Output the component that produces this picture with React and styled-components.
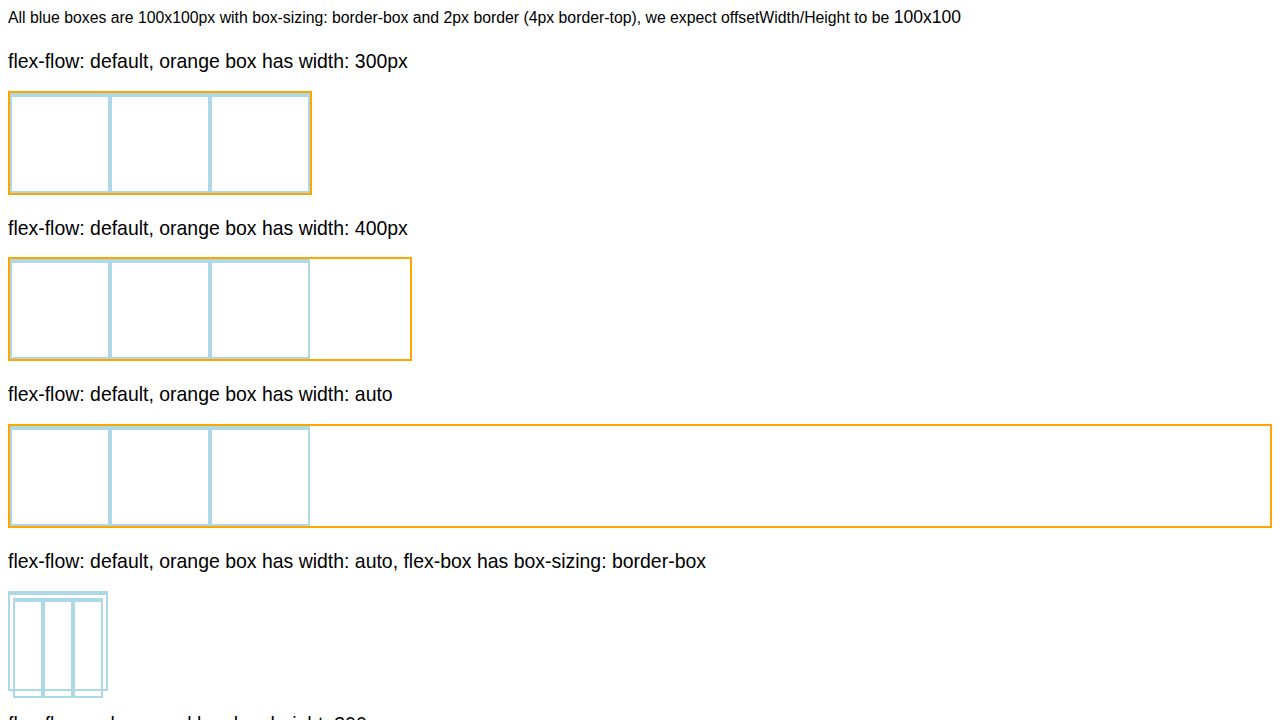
import React from "react";
import styled, { createGlobalStyle } from "styled-components";

const Global = createGlobalStyle`
  html { overflow: hidden; }
  body {
    margin: 8px;
    font-family: "Liberation Sans", Arial, sans-serif;
    color: #000;
    background: #fff;
  }
`;

const Intro = styled.div`
  font-size: 15.8px;
  line-height: 19.9px;
  white-space: nowrap;
`;

const Big = styled.span`
  font-size: 17.5px;
`;

const Heading = styled.p`
  font-size: 19.45px;
  line-height: 20.67px;
  margin: 23px 0 19px;
  white-space: nowrap;
`;

const Orange = styled.div`
  display: flex;
  border: 2px solid orange;
  width: ${(p) => p.$w || "auto"};
`;

const Blue = styled.div`
  box-sizing: border-box;
  width: 100px;
  height: 100px;
  flex: 0 1 auto;
  border: 2px solid lightblue;
  border-top-width: 4px;
`;

const BorderBoxFlex = styled.div`
  display: flex;
  box-sizing: border-box;
  width: 100px;
  height: 100px;
  padding: 3px;
  border: 2px solid lightblue;
  border-top-width: 4px;
`;

const Row = ({ w }) => (
  <Orange $w={w}>
    <Blue />
    <Blue />
    <Blue />
  </Orange>
);

export default function App() {
  return (
    <>
      <Global />
      <Intro>
        All blue boxes are 100x100px with box-sizing: border-box and 2px border (4px border-top), we expect
        offsetWidth/Height to be <Big>100x100</Big>
      </Intro>
      <Heading>flex-flow: default, orange box has width: 300px</Heading>
      <Row w="300px" />
      <Heading>flex-flow: default, orange box has width: 400px</Heading>
      <Row w="400px" />
      <Heading>flex-flow: default, orange box has width: auto</Heading>
      <Row />
      <Heading>flex-flow: default, orange box has width: auto, flex-box has box-sizing: border-box</Heading>
      <BorderBoxFlex>
        <Blue />
        <Blue />
        <Blue />
      </BorderBoxFlex>
      <Heading>flex-flow: column, red box has height: 300px</Heading>
    </>
  );
}
